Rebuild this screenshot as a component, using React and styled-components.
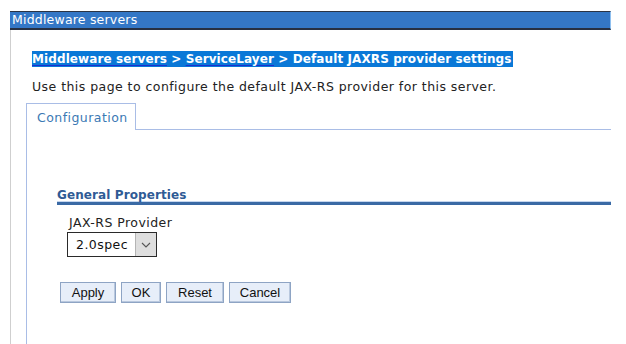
import React from "react";
import styled, { createGlobalStyle } from "styled-components";

const GlobalStyle = createGlobalStyle`
  html, body {
    margin: 0;
    padding: 0;
    background: #ffffff;
  }
  body {
    font-family: "DejaVu Sans", Verdana, sans-serif;
    font-size: 12.5px;
    letter-spacing: 0.45px;
    color: #1a1a1a;
  }
`;

const Page = styled.div`
  width: 601px;
  height: 344px;
  padding: 11px 0 0 10px;
  box-sizing: content-box;
  display: flex;
  flex-direction: column;
  overflow: hidden;
`;

const TitleBar = styled.div`
  height: 16px;
  line-height: 16px;
  background-color: #3477c6;
  border-top: 1px solid #2b3444;
  border-bottom: 2px solid #273042;
  border-right: 1px solid #8fc0f0;
  color: #ffffff;
  font-size: 12.5px;
  letter-spacing: 0.2px;
  padding-left: 2px;
`;

const Main = styled.div`
  flex: 1;
  border-left: 1px solid #cfcfcf;
  padding: 21px 0 0 15px;
  display: flex;
  flex-direction: column;
`;

const Breadcrumb = styled.div`
  margin-left: 6px;
  font-weight: bold;
  font-size: 12px;
  letter-spacing: 0.1px;
  line-height: 17px;
`;

const Highlight = styled.span`
  background-color: #0a78d7;
  color: #ffffff;
  padding: 1px 1px 1px 0;
`;

const Crumb = styled.a`
  color: #ffffff;
  text-decoration: underline;
  text-decoration-color: #1d2fd0;
  text-underline-offset: 2px;
`;

const Description = styled.p`
  margin: 12px 0 0 6px;
  line-height: 14px;
  color: #222;
`;

const TabStrip = styled.div`
  display: flex;
  margin-top: 9px;
`;

const Tab = styled.div`
  width: 110px;
  height: 27px;
  border: 1px solid #a9bde6;
  border-bottom: none;
  color: #3b79b4;
  line-height: 14px;
  padding: 7px 0 0 10px;
  box-sizing: border-box;
`;

const TabFiller = styled.div`
  flex: 1;
  border-bottom: 1px solid #a9bde6;
`;

const Panel = styled.div`
  flex: 1;
  border-left: 1px solid #a9bde6;
  padding: 58px 0 0 30px;
`;

const SectionTitle = styled.div`
  font-weight: bold;
  font-size: 12px;
  letter-spacing: 0.1px;
  line-height: 14px;
  color: #2f5b95;
  border-bottom: 3px solid #3a6aa5;
  box-shadow: 0 -1px 0 #c5d6ee inset;
`;

const Field = styled.div`
  margin: 11px 0 0 10px;
  display: flex;
  flex-direction: column;
  align-items: flex-start;
`;

const FieldLabel = styled.label`
  line-height: 13px;
  padding-left: 2px;
  color: #222;
`;

const SelectBox = styled.div`
  margin-top: 3px;
  display: flex;
  width: 90px;
  height: 25px;
  border: 1px solid #2a2a2a;
  box-sizing: border-box;
  background: #fff;
`;

const SelectValue = styled.span`
  flex: 1;
  padding-left: 8px;
  line-height: 23px;
  color: #111;
`;

const SelectArrow = styled.span`
  width: 20px;
  background: #dedede;
  border-left: 1px solid #b4b4b4;
  display: flex;
  align-items: center;
  justify-content: center;
`;

const ButtonRow = styled.div`
  display: flex;
  gap: 5px;
  margin: 25px 0 0 3px;
`;

const Button = styled.button`
  height: 21px;
  width: ${(p) => p.$w}px;
  padding: 0;
  background: #e7eef9;
  border: 1px solid #8ea4c4;
  box-shadow: inset -1px -1px 0 #b9c8de;
  font-family: "Liberation Sans", Arial, sans-serif;
  font-size: 13px;
  letter-spacing: 0;
  color: #111;
`;

const Chevron = () => (
  <svg width="10" height="6" viewBox="0 0 10 6">
    <path d="M1 1 L5 5 L9 1" fill="none" stroke="#555" strokeWidth="1.1" />
  </svg>
);

export default function App() {
  return (
    <>
      <GlobalStyle />
      <Page>
        <TitleBar>Middleware servers</TitleBar>
        <Main>
          <Breadcrumb>
            <Highlight>
              <Crumb>Middleware servers</Crumb> &gt; <Crumb>ServiceLayer</Crumb> &gt; Default JAXRS provider settings
            </Highlight>
          </Breadcrumb>
          <Description>
            Use this page to configure the default JAX-RS provider for this server.
          </Description>
          <TabStrip>
            <Tab>Configuration</Tab>
            <TabFiller />
          </TabStrip>
          <Panel>
            <SectionTitle>General Properties</SectionTitle>
            <Field>
              <FieldLabel>JAX-RS Provider</FieldLabel>
              <SelectBox>
                <SelectValue>2.0spec</SelectValue>
                <SelectArrow>
                  <Chevron />
                </SelectArrow>
              </SelectBox>
            </Field>
            <ButtonRow>
              <Button $w={56}>Apply</Button>
              <Button $w={40}>OK</Button>
              <Button $w={58}>Reset</Button>
              <Button $w={62}>Cancel</Button>
            </ButtonRow>
          </Panel>
        </Main>
      </Page>
    </>
  );
}
